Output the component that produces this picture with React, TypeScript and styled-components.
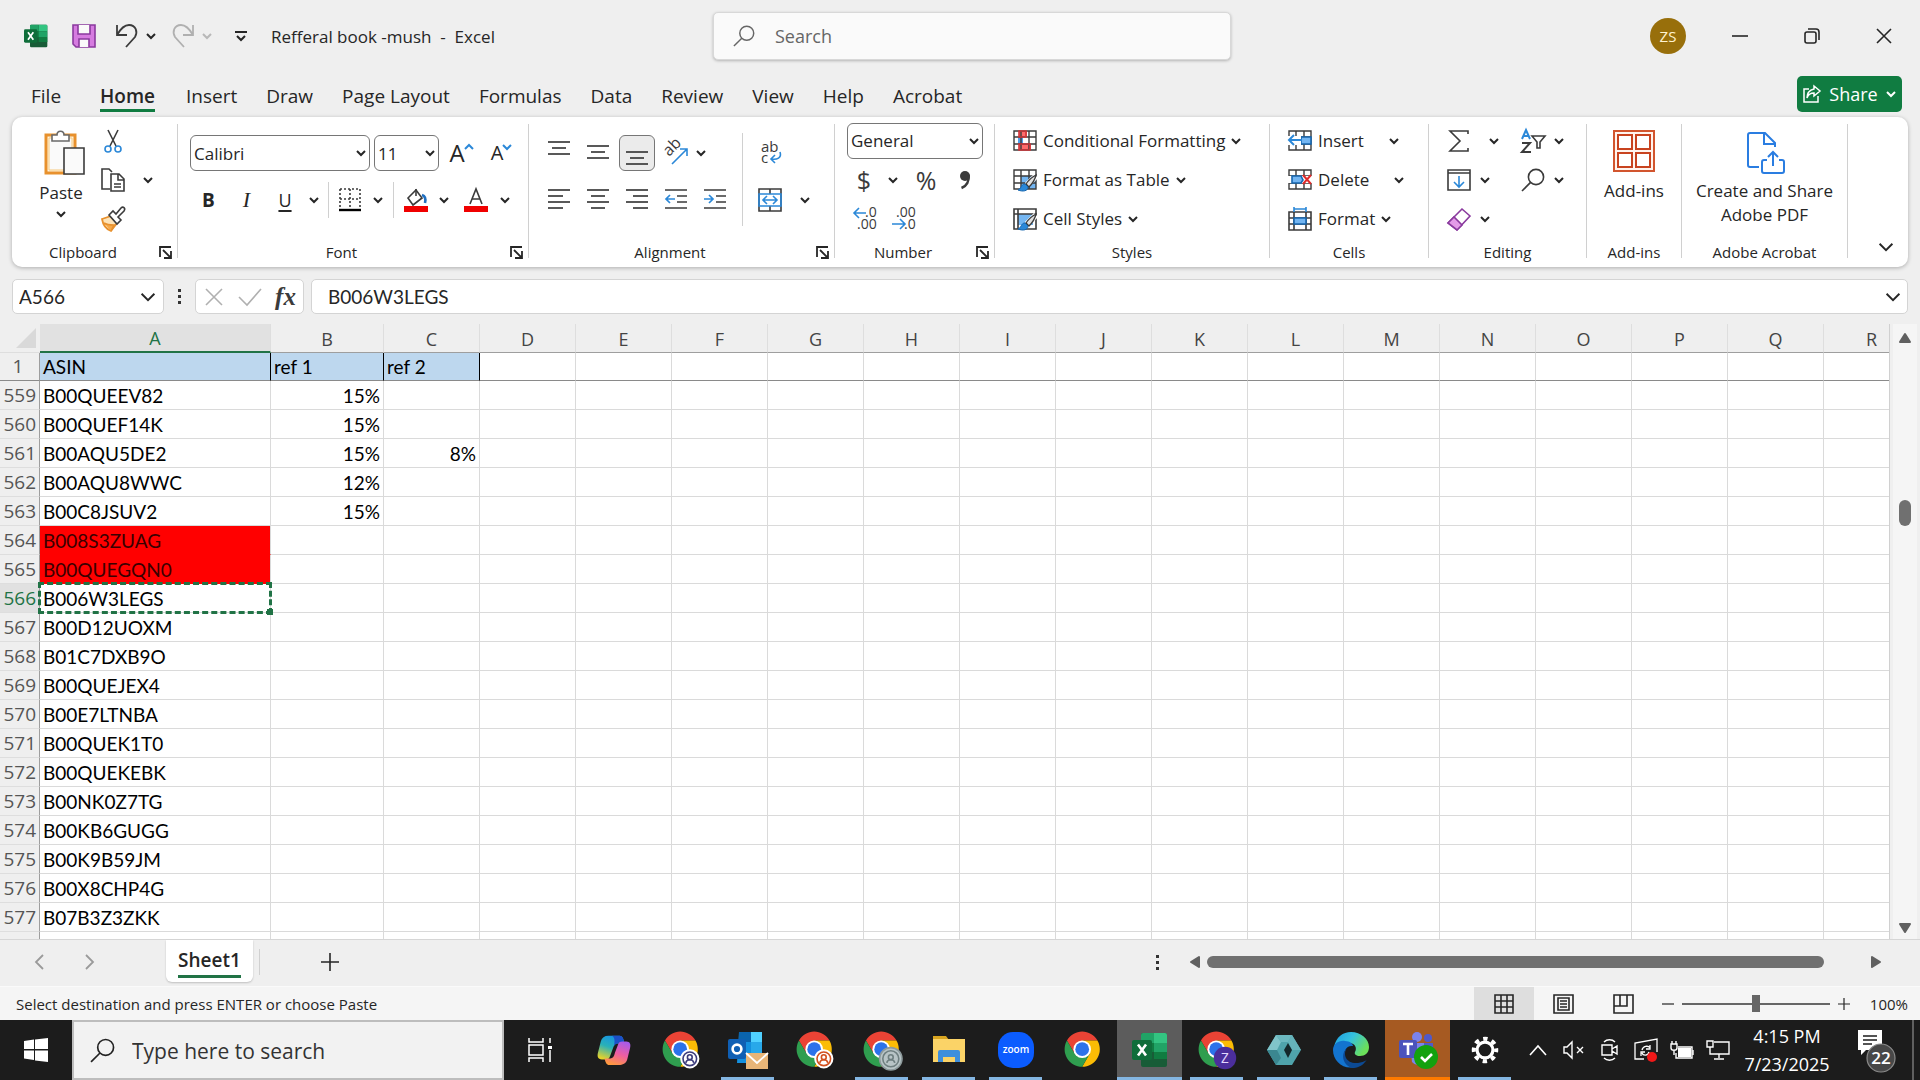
import React from "react";
import styled, { createGlobalStyle, css } from "styled-components";

const ui = `"Open Sans", "Noto Sans", sans-serif`;
const sheet = `Lato, "Open Sans", sans-serif`;
const ink = "#262626";
const line = "#3b3b3b";
const blue = "#2b88d8";
const green = "#107c41";

const Global = createGlobalStyle`
  *, *::before, *::after { box-sizing: border-box; }
  body { margin: 0; background: #efefef; color: ${ink}; font-family: ${ui}; font-size: 17px; overflow: hidden; }
  button, input, select { font: inherit; color: inherit; border: 0; background: none; padding: 0; margin: 0; outline: none; }
  svg { display: block; flex: none; overflow: visible; }
`;

const Shell = styled.div`
  display: flex;
  flex-direction: column;
  height: 100vh;
`;

/* ---------- drawing helpers ---------- */

type SvgProps = { w: number; h?: number; vb?: string; children: React.ReactNode; stroke?: string; sw?: number };
const Draw = ({ w, h = w, vb, children, stroke = line, sw = 1.6 }: SvgProps) => (
  <svg width={w} height={h} viewBox={vb ?? `0 0 ${w} ${h}`} fill="none" stroke={stroke} strokeWidth={sw} aria-hidden="true">
    {children}
  </svg>
);

const Chevron = ({ color = "#262626", size = 10, sw = 2 }: { color?: string; size?: number; sw?: number }) => (
  <Draw w={size} vb="0 0 10 10" stroke={color} sw={sw}>
    <path d="M1 3l4 4 4-4" />
  </Draw>
);

const Magnifier = ({ size, color }: { size: number; color: string }) => (
  <Draw w={size} vb="0 0 24 24" stroke={color} sw={1.6}>
    <circle cx="15" cy="9" r="7.6" />
    <path d="M9.6 14.4L1 23" />
  </Draw>
);

/* ---------- title bar ---------- */

const TitleBar = styled.header`
  display: grid;
  grid-template-columns: 713fr 518px 689fr;
  align-items: center;
  height: 72px;
  flex: none;
`;

const QuickAccess = styled.div`
  display: flex;
  align-items: center;
  padding-left: 24px;
`;

const QuickButton = styled.button<{ $w: number; $gap?: number }>`
  display: flex;
  align-items: center;
  justify-content: center;
  width: ${(p) => p.$w}px;
  height: 30px;
  margin-right: ${(p) => p.$gap ?? 0}px;
`;

const DocTitle = styled.h1`
  margin: 0;
  font-size: 17px;
  font-weight: 400;
  white-space: pre;
`;

const SearchBox = styled.label`
  display: flex;
  align-items: center;
  gap: 20px;
  height: 48px;
  padding: 0 19px;
  background: #fafafa;
  border: 1px solid #d8d8d8;
  border-radius: 5px;
  box-shadow: 0 1px 3px rgba(0, 0, 0, 0.25);
  input {
    flex: 1;
    font-size: 18px;
  }
  input::placeholder {
    color: #666;
    opacity: 1;
  }
`;

const WindowControls = styled.div`
  display: flex;
  justify-content: flex-end;
  align-items: center;
`;

const Avatar = styled.button`
  width: 36px;
  height: 36px;
  margin-right: 18px;
  border-radius: 50%;
  background: #986f0b;
  color: #fff3d0;
  font-size: 15px;
`;

const ControlButton = styled.button`
  display: flex;
  justify-content: center;
  align-items: center;
  width: 72px;
  height: 48px;
`;

const ExcelLogo = ({ size }: { size: number }) => (
  <svg width={size} height={size} viewBox="0 0 36 36" aria-hidden="true">
    <rect x="9" y="1" width="26" height="34" rx="2" fill="#185c37" />
    <path d="M22 1h11a2 2 0 0 1 2 2v8H22z" fill="#33c481" />
    <path d="M9 3a2 2 0 0 1 2-2h11v10H9z" fill="#21a366" />
    <path d="M9 11h13v9H9z" fill="#107c41" />
    <path d="M22 11h13v9H22z" fill="#21a366" />
    <path d="M22 20h13v7H22z" fill="#107c41" />
    <rect x="0" y="8" width="20" height="20" rx="2" fill="#0f6d3a" />
    <path d="M6 12.5l8 11M14 12.5l-8 11" stroke="#fff" strokeWidth="2.6" />
  </svg>
);

const Title = () => (
  <TitleBar>
    <QuickAccess>
      <QuickButton $w={24} $gap={24} aria-label="Excel"><ExcelLogo size={24} /></QuickButton>
      <QuickButton $w={24} $gap={19} aria-label="Save">
        <Draw w={24} stroke="#8a3a9e">
          <path d="M1 1h22v22H4l-3-3z" fill="#d67be0" />
          <path d="M6 1v9h12V1" fill="#fafafa" />
          <path d="M7 23v-8h10v8" fill="#fafafa" />
        </Draw>
      </QuickButton>
      <QuickButton $w={24} $gap={7} aria-label="Undo">
        <Draw w={24} sw={1.8}><path d="M2 1v10h10M2 11C6 4 10 1 14 1c7 0 9 7 6 12l-9 10" /></Draw>
      </QuickButton>
      <QuickButton $w={10} $gap={15} aria-label="Undo history"><Chevron /></QuickButton>
      <QuickButton $w={24} $gap={7} aria-label="Redo">
        <Draw w={24} stroke="#b0b0b0" sw={1.8}><path d="M22 1v10H12M22 11C18 4 14 1 10 1 3 1 1 8 4 13l9 10" /></Draw>
      </QuickButton>
      <QuickButton $w={10} $gap={23} aria-label="Redo history"><Chevron color="#b8b8b8" /></QuickButton>
      <QuickButton $w={12} $gap={24} aria-label="Customize toolbar">
        <Draw w={12} stroke={ink} sw={2}><path d="M0 2h12M2 6l4 4 4-4" /></Draw>
      </QuickButton>
      <DocTitle>Refferal book -mush  -  Excel</DocTitle>
    </QuickAccess>
    <SearchBox>
      <Magnifier size={22} color="#666" />
      <input type="text" placeholder="Search" aria-label="Search" />
    </SearchBox>
    <WindowControls>
      <Avatar>ZS</Avatar>
      <ControlButton aria-label="Minimize"><Draw w={16} stroke={ink}><path d="M0 8h16" /></Draw></ControlButton>
      <ControlButton aria-label="Restore">
        <Draw w={16} stroke={ink}><rect x="1" y="4" width="11" height="11" rx="2" /><path d="M4 1h8a3 3 0 0 1 3 3v8" /></Draw>
      </ControlButton>
      <ControlButton aria-label="Close"><Draw w={16} stroke={ink}><path d="M1 1l14 14M15 1L1 15" /></Draw></ControlButton>
    </WindowControls>
  </TitleBar>
);

/* ---------- ribbon tabs ---------- */

const TabRow = styled.nav`
  display: flex;
  align-items: flex-start;
  gap: 1px;
  height: 45px;
  flex: none;
  padding: 4px 18px 0 17px;
`;

const Tab = styled.button<{ $active?: boolean }>`
  height: 36px;
  padding: 0 ${(p) => (p.$active ? 16 : 14)}px;
  font-size: 19px;
  font-weight: ${(p) => (p.$active ? 600 : 400)};
  &:first-child {
    margin-right: 8px;
  }
  span {
    display: block;
    height: 36px;
    line-height: 40px;
    border-bottom: 3px solid ${(p) => (p.$active ? green : "transparent")};
  }
`;

const ShareButton = styled.button`
  display: flex;
  align-items: center;
  justify-content: space-between;
  width: 105px;
  height: 36px;
  margin-left: auto;
  padding: 0 6px;
  border-radius: 5px;
  background: ${green};
  color: #fff;
  font-size: 18px;
`;

const tabs = ["File", "Home", "Insert", "Draw", "Page Layout", "Formulas", "Data", "Review", "View", "Help", "Acrobat"];

const Tabs = () => (
  <TabRow>
    {tabs.map((t) => (
      <Tab key={t} $active={t === "Home"}><span>{t}</span></Tab>
    ))}
    <ShareButton>
      <Draw w={18} stroke="#fff" sw={1.5}><path d="M6 4H1v13h14v-6M11 1l6 5-6 5V8c-4 0-6 2-7 5 0-5 3-8 7-9z" /></Draw>
      Share
      <Chevron color="#fff" />
    </ShareButton>
  </TabRow>
);

/* ---------- ribbon ---------- */

const RibbonPanel = styled.section`
  display: flex;
  flex: none;
  height: 150px;
  margin: 0 12px;
  background: #fff;
  border-radius: 10px;
  box-shadow: 0 1px 4px rgba(0, 0, 0, 0.28);
`;

const GroupBox = styled.div<{ $w: number }>`
  display: flex;
  flex-direction: column;
  flex: none;
  width: ${(p) => p.$w}px;
  margin: 7px 0 9px;
  border-right: 1px solid #d0d0d0;
`;

const GroupBody = styled.div<{ $pad: number }>`
  display: flex;
  flex: 1;
  margin-top: -3px;
  padding-left: ${(p) => p.$pad}px;
`;

const GroupFooter = styled.div`
  display: flex;
  align-items: center;
  height: 12px;
  font-size: 15px;
  span {
    flex: 1;
    text-align: center;
    line-height: 20px;
  }
`;

const Launcher = styled.button`
  width: 23px;
  height: 14px;
  padding-left: 5px;
`;

const Stack = styled.div<{ $top?: number; $gap?: number; $w?: number }>`
  display: flex;
  flex-direction: column;
  flex: none;
  padding-top: ${(p) => p.$top ?? 0}px;
  gap: ${(p) => p.$gap ?? 0}px;
  width: ${(p) => (p.$w ? `${p.$w}px` : "auto")};
`;

const Row = styled.div<{ $h?: number; $gap?: number }>`
  display: flex;
  align-items: center;
  gap: ${(p) => p.$gap ?? 0}px;
  height: ${(p) => p.$h ?? 39}px;
`;

const Tool = styled.button<{ $w?: number; $on?: boolean }>`
  display: flex;
  flex: none;
  align-items: center;
  justify-content: center;
  width: ${(p) => p.$w ?? 36}px;
  height: 36px;
  ${(p) =>
    p.$on &&
    css`
      background: #ebebeb;
      border: 1px solid #767676;
      border-radius: 6px;
    `}
`;

const LabelTool = styled.button`
  display: flex;
  align-items: center;
  gap: 6px;
  height: 36px;
  white-space: nowrap;
`;

const BigTool = styled.button<{ $w: number }>`
  display: flex;
  flex-direction: column;
  align-items: center;
  width: ${(p) => p.$w}px;
  padding-top: 9px;
  line-height: 24px;
  svg:first-child {
    margin-bottom: 6px;
  }
  svg:last-child:not(:first-child) {
    margin-top: 4px;
  }
`;

const Rule = styled.span<{ $h: number; $m?: string }>`
  width: 1px;
  height: ${(p) => p.$h}px;
  margin: ${(p) => p.$m ?? "0"};
  background: #d0d0d0;
`;

const Combo = styled.label<{ $w: number }>`
  display: grid;
  align-items: center;
  width: ${(p) => p.$w}px;
  height: 36px;
  background: #fff;
  border: 1px solid #767676;
  border-radius: 6px;
  select {
    grid-area: 1 / 1;
    width: 100%;
    padding-left: 3px;
    appearance: none;
  }
  svg {
    grid-area: 1 / 1;
    justify-self: end;
    margin-right: 3px;
    pointer-events: none;
  }
`;

const Picker = ({ w, value, label }: { w: number; value: string; label: string }) => (
  <Combo $w={w}>
    <select aria-label={label} defaultValue={value}><option>{value}</option></select>
    <Chevron />
  </Combo>
);

const More = ({ w = 20, label }: { w?: number; label: string }) => (
  <Tool $w={w} aria-label={label}><Chevron /></Tool>
);

type GroupProps = { w: number; pad: number; label: string; launcher?: boolean; children: React.ReactNode };
const Group = ({ w, pad, label, launcher, children }: GroupProps) => (
  <GroupBox $w={w}>
    <GroupBody $pad={pad}>{children}</GroupBody>
    <GroupFooter>
      <span>{label}</span>
      {launcher && (
        <Launcher aria-label={`${label} settings`}>
          <Draw w={13} stroke={ink} sw={1.8}><path d="M1 11V1h11M4 4l7 7M12 5v7H5" /></Draw>
        </Launcher>
      )}
    </GroupFooter>
  </GroupBox>
);

const Lines = ({ rows }: { rows: [number, number, number][] }) => (
  <Draw w={22} h={24} sw={1.7}>
    {rows.map(([x1, x2, y], i) => <path key={i} d={`M${x1} ${y}H${x2}`} />)}
  </Draw>
);

const GlyphA = styled.span<{ $size: number }>`
  font-size: ${(p) => p.$size}px;
  line-height: 36px;
`;

const BoldB = styled.b`font-size: 19px;`;
const ItalicI = styled.i`font: italic 22px "Liberation Serif", serif;`;
const UnderU = styled.u`font-size: 18px; text-underline-offset: 3px; text-decoration-thickness: 2px;`;
const Symbol = styled.span`font-size: 25px; line-height: 34px; color: ${line};`;

const GridBase = () => <path d="M1 1h22v19H1zM1 7h22M1 14h22M8 1v19M16 1v19" strokeWidth="1.4" />;
const Brush = () => (
  <>
    <path d="M23 7l-9 9" stroke="#fff" strokeWidth="6" />
    <path d="M23 6c-4 2-8 6-10 9l3 3c3-3 6-7 7-12z" fill="#e0e0e0" strokeWidth="1.3" />
    <path d="M12 15c-4 0-3 4-7 6 5 2 10 1 10-3z" fill="#2b88d8" stroke="#1767b0" strokeWidth="1" />
  </>
);

const CollapseButton = styled.button`
  align-self: flex-end;
  margin: 0 6px 12px auto;
  padding: 0 8px;
`;

const Ribbon = () => (
  <RibbonPanel>
    <Group w={166} pad={24} label="Clipboard" launcher>
      <BigTool $w={50}>
        <Draw w={50} h={45} vb="-8 0 50 45">
          <path d="M2 5h29v38H2z" fill="#fff3dc" stroke="#e8912d" strokeWidth="3" />
          <path d="M5 8h23v32H5z" fill="#fafafa" stroke="#f7c97c" strokeWidth="1" />
          <path d="M8 11V5h5c0-5 7-5 7 0h5v6z" fill="#fff" stroke="#6a6a6a" />
          <path d="M20 18h20v26H20z" fill="#fafafa" />
        </Draw>
        Paste
        <Chevron />
      </BigTool>
      <Stack $w={60}>
        <Row>
          <Tool $w={54} aria-label="Cut">
            <Draw w={18} h={24}>
              <path d="M4 1l8 16M14 1L6 17" /><circle cx="4" cy="20" r="3" stroke={blue} /><circle cx="14" cy="20" r="3" stroke={blue} />
            </Draw>
          </Tool>
        </Row>
        <Row>
          <Tool $w={54} aria-label="Copy">
            <Draw w={24}>
              <path d="M9 21H1V1h7l3 3" /><path d="M10 6h8l5 5v12H10zM17 6v6h6M13 16h7M13 19h7" />
            </Draw>
          </Tool>
          <More w={16} label="Copy options" />
        </Row>
        <Row>
          <Tool $w={54} aria-label="Format painter">
            <Draw w={24} h={26}>
              <path d="M1 13l9-3 6 7-6 8c-5-2-8-6-9-12z" fill="#fde3b8" stroke="#e8912d" strokeWidth="1.8" />
              <path d="M3 17c3 2 6 2 10 2l-3 6" fill="#f6a94a" stroke="#e8912d" />
              <path d="M8 9l4-4 3 3 5-6c2-2 5 0 3 3l-6 6 3 3-4 4z" fill="#fff" />
            </Draw>
          </Tool>
        </Row>
      </Stack>
    </Group>

    <Group w={351} pad={12} label="Font" launcher>
      <Stack $top={8}>
        <Row $h={48} $gap={4}>
          <Picker w={180} value="Calibri" label="Font name" />
          <Picker w={65} value="11" label="Font size" />
          <Tool aria-label="Increase font size">
            <GlyphA $size={24}>A</GlyphA>
            <Draw w={8} h={20} stroke={blue} sw={2}><path d="M0 6l4-4 4 4" /></Draw>
          </Tool>
          <Tool aria-label="Decrease font size">
            <GlyphA $size={20}>A</GlyphA>
            <Draw w={8} h={20} stroke={blue} sw={2}><path d="M0 2l4 4 4-4" /></Draw>
          </Tool>
        </Row>
        <Row $h={46}>
          <Tool $w={37} aria-label="Bold"><BoldB>B</BoldB></Tool>
          <Tool $w={39} aria-label="Italic"><ItalicI>I</ItalicI></Tool>
          <Tool $w={38} aria-label="Underline"><UnderU>U</UnderU></Tool>
          <More label="Underline options" />
          <Rule $h={36} $m="0 3px 0 4px" />
          <Tool aria-label="Borders">
            <Draw w={24}>
              <path d="M2 1v20M12 1v20M22 1v20M2 1h20M2 11h20" strokeDasharray="2 2" /><path d="M1 22h22" stroke="#000" strokeWidth="2.4" />
            </Draw>
          </Tool>
          <More label="Border options" />
          <Rule $h={36} $m="0 4px 0 5px" />
          <Tool aria-label="Fill color">
            <Draw w={24}>
              <path d="M4 10l8-8 6 8-9 7z" /><path d="M12 1v7" /><path d="M18 7c3 1 4 4 3 8" stroke="#1f6fc0" strokeWidth="2.6" />
              <path d="M0 18h24v6H0z" fill="#f00000" stroke="none" />
            </Draw>
          </Tool>
          <More label="Fill options" />
          <Tool $w={44} aria-label="Font color">
            <Draw w={24}>
              <path d="M6 16l6-15 6 15M8 11h8" /><path d="M0 18h24v6H0z" fill="#f00000" stroke="none" />
            </Draw>
          </Tool>
          <More w={14} label="Font color options" />
        </Row>
      </Stack>
    </Group>

    <Group w={306} pad={12} label="Alignment" launcher>
      <Stack $top={8}>
        <Row $h={48} $gap={3}>
          <Tool aria-label="Top align"><Lines rows={[[0, 22, 1], [4, 18, 7], [0, 22, 13]]} /></Tool>
          <Tool aria-label="Middle align"><Lines rows={[[0, 22, 5], [4, 18, 11], [0, 22, 17]]} /></Tool>
          <Tool $on aria-label="Bottom align"><Lines rows={[[0, 22, 11], [4, 18, 17], [0, 22, 23]]} /></Tool>
          <Tool aria-label="Orientation">
            <Draw w={26} h={24}>
              <text x="0" y="0" transform="translate(6 16) rotate(-45)" fontFamily={ui} fontSize="16" fill={line} stroke="none">ab</text>
              <path d="M9 23L24 8M17 8h7v7" stroke={blue} />
            </Draw>
          </Tool>
          <More w={8} label="Orientation options" />
        </Row>
        <Row $h={46} $gap={3}>
          <Tool aria-label="Align left"><Lines rows={[[0, 22, 2], [0, 15, 8], [0, 22, 14], [0, 15, 20]]} /></Tool>
          <Tool aria-label="Center"><Lines rows={[[0, 22, 2], [4, 18, 8], [0, 22, 14], [4, 18, 20]]} /></Tool>
          <Tool aria-label="Align right"><Lines rows={[[0, 22, 2], [7, 22, 8], [0, 22, 14], [7, 22, 20]]} /></Tool>
          <Tool aria-label="Decrease indent">
            <Draw w={22} h={24} sw={1.7}><path d="M0 2h22M12 8h10M12 14h10M0 20h22" /><path d="M10 11H1M5 7l-4 4 4 4" stroke={blue} /></Draw>
          </Tool>
          <Tool aria-label="Increase indent">
            <Draw w={22} h={24} sw={1.7}><path d="M0 2h22M12 8h10M12 14h10M0 20h22" /><path d="M0 11h9M5 7l4 4-4 4" stroke={blue} /></Draw>
          </Tool>
        </Row>
      </Stack>
      <Rule $h={93} $m="12px 9px 0 9px" />
      <Stack $top={8}>
        <Row $h={48}>
          <Tool $w={38} aria-label="Wrap text">
            <Draw w={24} h={26}>
              <text fontFamily={ui} fontSize="15" fill={line} stroke="none"><tspan x="2" y="12">ab</tspan><tspan x="2" y="23">c</tspan></text>
              <path d="M21 12c2 6-3 8-9 7M16 15l-4 4 4 4" stroke={blue} />
            </Draw>
          </Tool>
        </Row>
        <Row $h={46}>
          <Tool aria-label="Merge and center">
            <Draw w={24}>
              <path d="M1 1h22v22H1zM12 1v5M12 18v5" /><path d="M1 6h22v12H1zM5 12h14M9 8l-4 4 4 4M15 8l4 4-4 4" stroke={blue} />
            </Draw>
          </Tool>
          <More w={34} label="Merge options" />
        </Row>
      </Stack>
    </Group>

    <Group w={160} pad={12} label="Number" launcher>
      <Stack>
        <Row><Picker w={136} value="General" label="Number format" /></Row>
        <Row>
          <Tool $w={34} aria-label="Currency"><Symbol>$</Symbol></Tool>
          <More w={24} label="Currency options" />
          <Tool $w={42} aria-label="Percent"><Symbol>%</Symbol></Tool>
          <Tool aria-label="Comma style">
            <Draw w={12} h={20}><circle cx="6" cy="6" r="5" fill={line} stroke="none" /><path d="M9.5 5c1 6-2 11-7 13" strokeWidth="2.6" /></Draw>
          </Tool>
        </Row>
        <Row $gap={3}>
          <Tool aria-label="Increase decimal">
            <Draw w={24}>
              <text fontFamily={ui} fontSize="14" fill={line} stroke="none"><tspan x="12" y="10">.0</tspan><tspan x="4" y="22">.00</tspan></text>
              <path d="M13 6H1M6 1L1 6l5 5" stroke={blue} />
            </Draw>
          </Tool>
          <Tool aria-label="Decrease decimal">
            <Draw w={24}>
              <text fontFamily={ui} fontSize="14" fill={line} stroke="none"><tspan x="4" y="10">.00</tspan><tspan x="12" y="22">.0</tspan></text>
              <path d="M0 17h12M8 12l5 5-5 5" stroke={blue} />
            </Draw>
          </Tool>
        </Row>
      </Stack>
    </Group>

    <Group w={275} pad={18} label="Styles">
      <Stack>
        <Row>
          <LabelTool>
            <Draw w={24} h={22}>
              <path d="M6 1h8v6H6zM6 14h12v6H6z" fill="#ff6b6b" stroke="none" /><path d="M5 7h5v7H5z" fill="#4f9fe8" stroke="none" />
              <GridBase /><path d="M6 1h7v6H6zM6 14h11v6H6z" stroke="#d13438" />
            </Draw>
            Conditional Formatting <Chevron />
          </LabelTool>
        </Row>
        <Row>
          <LabelTool>
            <Draw w={24} h={22}><path d="M8 7h15v13H8z" fill="#74b6f2" stroke="none" /><GridBase /><Brush /></Draw>
            Format as Table <Chevron />
          </LabelTool>
        </Row>
        <Row>
          <LabelTool>
            <Draw w={24} h={22}><path d="M5 6h15v11H5z" fill="#74b6f2" stroke="none" /><path d="M1 1h22v20H1zM5 1v20M1 6h22" /><Brush /></Draw>
            Cell Styles <Chevron />
          </LabelTool>
        </Row>
      </Stack>
    </Group>

    <Group w={159} pad={18} label="Cells">
      <Stack>
        <Row $gap={20}>
          <LabelTool>
            <Draw w={24} h={22}><GridBase /><path d="M13 7h10v7H13z" fill="#74b6f2" stroke="#1767b0" /><path d="M0 6h13v9H0z" fill="#fff" stroke="none" /><path d="M14 10H1M6 5l-5 5 5 5" stroke={blue} strokeWidth="2" /></Draw>
            Insert
          </LabelTool>
          <More label="Insert options" />
        </Row>
        <Row $gap={20}>
          <LabelTool>
            <Draw w={24} h={22}><GridBase /><path d="M0 7h24v7H0z" fill="#fff" stroke="none" /><path d="M4 7h9l2 4-2 3H4z" fill="#74b6f2" stroke="#1767b0" /><path d="M15 6l8 9M23 6l-8 9" stroke="#e02b2b" strokeWidth="2" /></Draw>
            Delete
          </LabelTool>
          <More label="Delete options" />
        </Row>
        <Row>
          <LabelTool>
            <Draw w={24} h={24}><path d="M1 5h22v18H1zM1 11h22M1 17h22M6 5v18M18 5v18" /><path d="M6 11h12v6H6z" fill="#74b6f2" stroke="#1767b0" /><path d="M6 0v5M18 0v5M6 2h12" stroke={blue} /></Draw>
            Format <Chevron />
          </LabelTool>
        </Row>
      </Stack>
    </Group>

    <Group w={158} pad={12} label="Editing">
      <Stack $w={74}>
        <Row $gap={7}>
          <Tool aria-label="AutoSum"><Draw w={20} h={22}><path d="M19 4V1H1l10 10L1 21h18v-3" /></Draw></Tool>
          <More label="Sum options" />
        </Row>
        <Row>
          <Tool aria-label="Fill"><Draw w={24} h={22}><path d="M1 1h22v20H1zM1 4h22" /><path d="M12 7v11M7 13l5 5 5-5" stroke={blue} /></Draw></Tool>
          <More w={16} label="Fill series options" />
        </Row>
        <Row>
          <Tool aria-label="Clear">
            <Draw w={24} stroke="#8a3a9e"><path d="M1 16L15 2l8 7L10 23z" fill="#fff" /><path d="M1 16l6-6 8 8-5 5z" fill="#e49be8" /></Draw>
          </Tool>
          <More w={16} label="Clear options" />
        </Row>
      </Stack>
      <Stack>
        <Row>
          <Tool aria-label="Sort and filter">
            <Draw w={26} h={26}>
              <path d="M2 11l4-9 4 9M4 8h5" stroke={blue} strokeWidth="2" /><path d="M2 15h8L2 24h9" strokeWidth="2" />
              <path d="M12 8h13l-5 6v6h-3v-6z" />
            </Draw>
          </Tool>
          <More w={16} label="Sort options" />
        </Row>
        <Row>
          <Tool aria-label="Find and select"><Magnifier size={24} color={line} /></Tool>
          <More w={16} label="Find options" />
        </Row>
      </Stack>
    </Group>

    <Group w={95} pad={0} label="Add-ins">
      <BigTool $w={94}>
        <Draw w={42} h={43} stroke="#c8431f" sw={2}>
          <path d="M1 1h40v40H1z" fill="#fff4ee" stroke="#d2552e" /><path d="M5 5h14v14H5zM23 5h14v14H23zM5 23h14v14H5zM23 23h14v14H23z" fill="#fff" />
        </Draw>
        Add-ins
      </BigTool>
    </Group>

    <Group w={166} pad={0} label="Adobe Acrobat">
      <BigTool $w={165}>
        <Draw w={36} h={43} vb="0 -1 36 43" stroke="#2a7de1" sw={2}>
          <path d="M12 36H3a2 2 0 0 1-2-2V4a2 2 0 0 1 2-2h15l10 10v4M17 2v11h11" />
          <path d="M20 29h-3a2 2 0 0 0-2 2v9a2 2 0 0 0 2 2h18a2 2 0 0 0 2-2v-9a2 2 0 0 0-2-2h-3M26 35V21M21 26l5-5 5 5" />
        </Draw>
        <span>Create and Share<br />Adobe PDF</span>
      </BigTool>
    </Group>

    <CollapseButton aria-label="Collapse ribbon"><Chevron size={16} sw={1.2} /></CollapseButton>
  </RibbonPanel>
);

/* ---------- formula bar ---------- */

const FormulaRow = styled.section`
  display: flex;
  flex: none;
  height: 57px;
  padding: 12px 12px 10px;
`;

const Field = styled.div<{ $w?: number }>`
  display: flex;
  align-items: center;
  flex: ${(p) => (p.$w ? `0 0 ${p.$w}px` : "1")};
  min-width: 0;
  height: 35px;
  background: #fff;
  border: 1px solid #d4d4d4;
  border-radius: 5px;
  & + & {
    margin-left: 7px;
  }
  input {
    flex: 1;
    width: 0;
    min-width: 0;
    font-family: ${sheet};
    font-size: 19px;
  }
`;

const NameInput = styled.input`
  padding-left: 6px;
`;

const FormulaInput = styled.input`
  padding-left: 16px;
`;

const FieldButton = styled.button<{ $w: number }>`
  display: flex;
  justify-content: center;
  width: ${(p) => p.$w}px;
`;

const Fx = styled.span`
  font: italic bold 25px/30px "Liberation Serif", serif;
  color: ${line};
`;

const Dots = styled.span<{ $m: string }>`
  display: flex;
  flex-direction: column;
  justify-content: center;
  gap: 3px;
  margin: ${(p) => p.$m};
  &::before, &::after, i {
    content: "";
    width: 3px;
    height: 3px;
    background: #333;
  }
`;

const FormulaBar = () => (
  <FormulaRow>
    <Field $w={152}>
      <NameInput aria-label="Name box" defaultValue="A566" />
      <FieldButton $w={30} aria-label="Names"><Chevron size={16} sw={1.2} /></FieldButton>
    </Field>
    <Dots $m="0 14px 1px"><i /></Dots>
    <Field $w={109}>
      <FieldButton $w={36} aria-label="Cancel"><Draw w={18} stroke="#b0b0b0"><path d="M1 1l16 16M17 1L1 17" /></Draw></FieldButton>
      <FieldButton $w={36} aria-label="Enter"><Draw w={24} h={18} stroke="#b0b0b0"><path d="M1 9l8 8L23 1" /></Draw></FieldButton>
      <FieldButton $w={35} aria-label="Insert function"><Fx>fx</Fx></FieldButton>
    </Field>
    <Field>
      <FormulaInput aria-label="Formula" defaultValue="B006W3LEGS" />
      <FieldButton $w={28} aria-label="Expand formula bar"><Chevron size={16} sw={1.2} /></FieldButton>
    </Field>
  </FormulaRow>
);

/* ---------- worksheet ---------- */

const SheetArea = styled.main`
  display: flex;
  flex: 1;
  min-height: 0;
`;

const GridClip = styled.div`
  flex: 1;
  min-width: 0;
  overflow: hidden;
  border-right: 1px solid #d0d0d0;
  background: #fff;
`;

const Cells = styled.table`
  width: 1920px;
  table-layout: fixed;
  border-collapse: separate;
  border-spacing: 0;
  font-family: ${sheet};
  font-size: 19px;
  color: #000;
`;

const Col = styled.col<{ $w: number }>`
  width: ${(p) => p.$w}px;
`;

const ColHead = styled.th<{ $on?: boolean }>`
  height: 29px;
  padding: 2px 0 0;
  font: 400 18px/25px ${ui};
  background: ${(p) => (p.$on ? "#e1e1e1" : "#efefef")};
  color: ${(p) => (p.$on ? "#217346" : "#444")};
  border-right: 1px solid #dedede;
  border-bottom: ${(p) => (p.$on ? "2px solid #217346" : "1px solid #9e9e9e")};
`;

const Corner = styled.td`
  background: #efefef;
  border-bottom: 1px solid #dedede;
  padding: 0 3px 4px 16px;
  vertical-align: bottom;
`;

const RowHead = styled.th<{ $on?: boolean; $frozen?: boolean }>`
  padding: ${(p) => (p.$frozen ? 0 : 1)}px 3px 0 0;
  font: 400 19px/25px ${ui};
  text-align: ${(p) => (p.$frozen ? "center" : "right")};
  background: ${(p) => (p.$on ? "#e1e1e1" : "#efefef")};
  color: ${(p) => (p.$on ? "#217346" : "#555")};
  border-right: 1px solid #9e9e9e;
  border-bottom: 1px solid ${(p) => (p.$frozen ? "#8a8a8a" : "#dedede")};
`;

const Cell = styled.td<{ $fill?: string; $right?: boolean; $frozen?: boolean; $edge?: string; $active?: boolean }>`
  position: ${(p) => (p.$active ? "relative" : "static")};
  height: ${(p) => (p.$frozen ? 28 : 29)}px;
  padding: ${(p) => (p.$frozen ? 0 : 1)}px 3px 0;
  line-height: 25px;
  text-align: ${(p) => (p.$right ? "right" : "left")};
  background: ${(p) => p.$fill ?? "#fff"};
  color: ${(p) => (p.$fill === "#ff0000" ? "#3a0000" : "#000")};
  border-right: 1px solid ${(p) => p.$edge ?? "#dadada"};
  border-bottom: 1px solid ${(p) => (p.$frozen ? "#8a8a8a" : p.$fill ?? "#dadada")};
`;

const Marquee = styled.span`
  position: absolute;
  inset: -2px;
  border: 3px dashed #217346;
  &::after {
    content: "";
    position: absolute;
    right: -4px;
    bottom: -4px;
    width: 6px;
    height: 6px;
    background: #217346;
  }
`;

const letters = "ABCDEFGHIJKLMNOPQR".split("");
const rows: [number, string, string?, string?][] = [
  [559, "B00QUEEV82", "15%"],
  [560, "B00QUEF14K", "15%"],
  [561, "B00AQU5DE2", "15%", "8%"],
  [562, "B00AQU8WWC", "12%"],
  [563, "B00C8JSUV2", "15%"],
  [564, "B008S3ZUAG"],
  [565, "B00QUEGQN0"],
  [566, "B006W3LEGS"],
  [567, "B00D12UOXM"],
  [568, "B01C7DXB9O"],
  [569, "B00QUEJEX4"],
  [570, "B00E7LTNBA"],
  [571, "B00QUEK1T0"],
  [572, "B00QUEKEBK"],
  [573, "B00NK0Z7TG"],
  [574, "B00KB6GUGG"],
  [575, "B00K9B59JM"],
  [576, "B00X8CHP4G"],
  [577, "B07B3Z3ZKK"],
];
const headings = ["ASIN", "ref 1", "ref 2"];
const flagged = [564, 565];
const active = 566;

const VScroll = styled.div`
  display: flex;
  flex-direction: column;
  align-items: center;
  width: 30px;
  padding: 7px 0 4px;
  background: linear-gradient(to right, #efefef 3px, #f5f5f5 3px, #f5f5f5 27px, #efefef 27px);
`;

const Thumb = styled.div<{ $w?: number; $h?: number; $grow?: number }>`
  flex: ${(p) => p.$grow ?? 0} 0 auto;
  width: ${(p) => (p.$w ? `${p.$w}px` : "auto")};
  height: ${(p) => p.$h}px;
  border-radius: 6px;
  background: #707070;
`;

const Space = styled.div<{ $grow: number }>`
  flex: ${(p) => p.$grow} 0 0;
`;

const Triangle = ({ turn }: { turn: number }) => (
  <Draw w={14} stroke="#606060" sw={2}>
    <path d="M7 3l5 8H2z" fill="#606060" strokeLinejoin="round" transform={`rotate(${turn} 7 7)`} />
  </Draw>
);

const Worksheet = () => (
  <SheetArea>
    <GridClip>
      <Cells>
        <colgroup>
          <Col $w={40} /><Col $w={231} /><Col $w={113} />
          {letters.slice(2).map((l) => <Col key={l} $w={96} />)}
        </colgroup>
        <thead>
          <tr>
            <Corner><Draw w={20} stroke="none"><path d="M20 0v20H0z" fill="#d9d9d9" /></Draw></Corner>
            {letters.map((l) => <ColHead key={l} scope="col" $on={l === "A"}>{l}</ColHead>)}
          </tr>
        </thead>
        <tbody>
          <tr>
            <RowHead scope="row" $frozen>1</RowHead>
            {letters.map((l, i) => (
              <Cell key={l} $frozen $fill={i < 3 ? "#bdd7ee" : undefined} $edge={i < 3 ? "#000" : undefined}>{headings[i]}</Cell>
            ))}
          </tr>
          {rows.map(([n, ...values]) => (
            <tr key={n}>
              <RowHead scope="row" $on={n === active}>{n}</RowHead>
              {letters.map((l, i) => (
                <Cell
                  key={l}
                  $right={i > 0}
                  $active={n === active && i === 0}
                  $fill={i === 0 && flagged.includes(n) ? "#ff0000" : undefined}
                >
                  {values[i]}
                  {n === active && i === 0 && <Marquee />}
                </Cell>
              ))}
            </tr>
          ))}
          <tr>
            <RowHead />
            {letters.map((l) => <Cell key={l} />)}
          </tr>
        </tbody>
      </Cells>
    </GridClip>
    <VScroll>
      <Triangle turn={0} />
      <Space $grow={156} />
      <Thumb $w={12} $h={26} />
      <Space $grow={396} />
      <Triangle turn={180} />
    </VScroll>
  </SheetArea>
);

/* ---------- sheet tabs ---------- */

const SheetBar = styled.section`
  display: flex;
  align-items: center;
  flex: none;
  height: 48px;
  padding: 0 37px 2px 32px;
  border-top: 1px solid #d6d6d6;
  border-bottom: 1px solid #fafafa;
`;

const NavButton = styled.button`
  display: flex;
  justify-content: center;
  width: 16px;
  margin-right: 33px;
`;

const SheetTab = styled.button`
  align-self: flex-start;
  width: 87px;
  height: 42px;
  margin-left: 36px;
  background: #fff;
  border-radius: 0 0 6px 6px;
  box-shadow: 0 1px 2px rgba(0, 0, 0, 0.2);
  font-size: 19px;
  font-weight: 600;
  span {
    display: inline-block;
    line-height: 30px;
    border-bottom: 3px solid #217346;
  }
`;

const HScroll = styled.div`
  display: flex;
  align-items: center;
  flex: 0 1 695px;
  height: 24px;
`;

const SheetTabs = () => (
  <SheetBar>
    <NavButton aria-label="Previous sheet"><Draw w={10} h={16} stroke="#9a9a9a" sw={1.8}><path d="M8 1L1 8l7 7" /></Draw></NavButton>
    <NavButton aria-label="Next sheet"><Draw w={10} h={16} stroke="#9a9a9a" sw={1.8}><path d="M2 1l7 7-7 7" /></Draw></NavButton>
    <SheetTab><span>Sheet1</span></SheetTab>
    <Rule $h={26} $m="0 62px 0 6px" />
    <NavButton aria-label="New sheet"><Draw w={18} stroke={ink}><path d="M9 0v18M0 9h18" /></Draw></NavButton>
    <Space $grow={1} />
    <Dots $m="0 29px 0 0"><i /></Dots>
    <HScroll>
      <Triangle turn={-90} />
      <Space $grow={5} />
      <Thumb $h={12} $grow={617} />
      <Space $grow={45} />
      <Triangle turn={90} />
    </HScroll>
  </SheetBar>
);

/* ---------- status bar ---------- */

const Status = styled.footer`
  display: flex;
  align-items: center;
  flex: none;
  height: 33px;
  padding: 0 12px 0 16px;
  background: #f5f5f5;
  font-size: 15px;
`;

const StatusText = styled.span`
  margin-right: auto;
`;

const ViewButton = styled.button<{ $on?: boolean }>`
  display: flex;
  align-items: center;
  justify-content: center;
  width: 60px;
  height: 33px;
  background: ${(p) => (p.$on ? "#dedede" : "transparent")};
`;

const ZoomButton = styled.button`
  margin: 0 8px;
`;

const ZoomRange = styled.input`
  width: 148px;
  height: 18px;
  appearance: none;
  background: linear-gradient(#666, #666) center / 100% 2px no-repeat;
  &::-webkit-slider-thumb {
    appearance: none;
    width: 8px;
    height: 17px;
    background: #666;
  }
`;

const ZoomValue = styled.button`
  margin-left: 12px;
`;

const StatusBar = () => (
  <Status>
    <StatusText>Select destination and press ENTER or choose Paste</StatusText>
    <ViewButton $on aria-label="Normal view"><Draw w={20} stroke={ink}><path d="M1 1h18v18H1zM1 7h18M1 13h18M7 1v18M13 1v18" /></Draw></ViewButton>
    <ViewButton aria-label="Page layout view"><Draw w={21} h={20} stroke={ink}><path d="M1 1h19v18H1zM5 4h11v12H5zM7 7h7M7 10h7M7 13h7" /></Draw></ViewButton>
    <ViewButton aria-label="Page break view"><Draw w={21} h={20} stroke={ink}><path d="M1 1h19v18H1zM7 1v11h7V1M1 12h6" /></Draw></ViewButton>
    <ZoomButton aria-label="Zoom out"><Draw w={12} stroke={ink} sw={1.2}><path d="M0 6h12" /></Draw></ZoomButton>
    <ZoomRange type="range" aria-label="Zoom" min={0} max={200} defaultValue={100} />
    <ZoomButton aria-label="Zoom in"><Draw w={12} stroke={ink} sw={1.2}><path d="M0 6h12M6 0v12" /></Draw></ZoomButton>
    <ZoomValue>100%</ZoomValue>
  </Status>
);

/* ---------- taskbar ---------- */

const Taskbar = styled.footer`
  display: flex;
  flex: none;
  height: 60px;
  background: #1c1c1c;
  color: #fff;
`;

const StartButton = styled.button<{ $w: number }>`
  display: flex;
  align-items: center;
  justify-content: center;
  width: ${(p) => p.$w}px;
`;

const TaskSearch = styled.label`
  display: flex;
  align-items: center;
  gap: 17px;
  width: 432px;
  padding-left: 16px;
  background: #f2f2f2;
  border: 2px solid #bdbdbd;
  input {
    flex: 1;
    min-width: 0;
    padding-top: 2px;
    font-size: 21px;
    color: #333;
  }
  input::placeholder {
    color: #333;
    opacity: 1;
  }
`;

const AppList = styled.div`
  display: flex;
  gap: 2px;
  padding-left: 5px;
`;

const AppButton = styled.button<{ $open?: boolean; $bg?: string; $bar?: string }>`
  display: grid;
  grid-template-rows: 57px 3px;
  justify-items: center;
  align-items: center;
  width: 65px;
  background: ${(p) => p.$bg ?? "transparent"};
  svg {
    margin-top: 3px;
  }
  &::after {
    content: "";
    width: ${(p) => (p.$bg ? 65 : 53)}px;
    height: 3px;
    background: ${(p) => (p.$open ? p.$bar ?? "#84b6e2" : "transparent")};
  }
`;

const Tray = styled.div`
  display: flex;
  align-items: center;
  margin-left: auto;
`;

const TrayButton = styled.button`
  display: flex;
  justify-content: center;
  width: 36px;
`;

const Clock = styled.button`
  width: 102px;
  line-height: 28px;
  font-size: 18px;
  white-space: nowrap;
`;

const Notices = styled.button`
  width: 74px;
  padding-left: 20px;
`;

const PeekButton = styled.button`
  width: 8px;
  height: 60px;
  border-left: 2px solid #606060;
`;

const Chrome = ({ badge }: { badge?: "navy" | "orange" | "grey" | "z" }) => (
  <svg width="40" height="40" viewBox="0 0 50 50" aria-hidden="true">
    <path d="M24 13H43.05A22 22 0 0 0 4.95 13L14.47 29.5z" fill="#ea4335" />
    <path d="M24 13H43.05A22 22 0 0 1 24 46L33.53 29.5z" fill="#fbbc05" />
    <path d="M4.95 13A22 22 0 0 0 24 46L33.53 29.5H14.47z" fill="#2f9e4f" />
    <circle cx="24" cy="24" r="11" fill="#fff" />
    <circle cx="24" cy="24" r="8.6" fill="#2b72ea" />
    {badge === "z" ? (
      <>
        <circle cx="35" cy="35" r="14" fill="#4b2e9c" />
        <text x="35" y="41" textAnchor="middle" fontFamily={ui} fontSize="17" fill="#e3d8ff">Z</text>
      </>
    ) : badge ? (
      <g
        fill="none"
        strokeWidth="2"
        stroke={{ navy: "#3d3d7c", orange: "#d2501e", grey: "#6f7f80" }[badge]}
      >
        <circle cx="36" cy="36" r={badge === "grey" ? 14 : 11} fill={badge === "grey" ? "#b8c4c6" : "#fff"} stroke={badge === "grey" ? "#8d9a9c" : "#fff"} />
        <circle cx="36" cy="36" r={badge === "grey" ? 10 : 8.5} />
        <circle cx="36" cy="34" r="3" />
        <path d="M31 41c1-5 9-5 10 0" />
      </g>
    ) : null}
  </svg>
);

const apps: { name: string; open?: boolean; bg?: string; bar?: string; art: React.ReactNode }[] = [
  {
    name: "Copilot",
    art: (
      <svg width="34" height="36" viewBox="0 0 36 38">
        <defs>
          <linearGradient id="cpA" x1="0.7" y1="0" x2="0.3" y2="1"><stop offset="0" stopColor="#1590e6" /><stop offset=".5" stopColor="#29b1b8" /><stop offset="1" stopColor="#e4d22c" /></linearGradient>
          <linearGradient id="cpB" x1="0.7" y1="0" x2="0.3" y2="1"><stop offset="0" stopColor="#a95be8" /><stop offset=".5" stopColor="#ee5ea2" /><stop offset="1" stopColor="#ff9a3c" /></linearGradient>
        </defs>
        <path d="M12 4h12c3 0 4 3 5 8h-7c-3 0-4 2-5 5l-3 8c-1 3-2 4-5 4H5c-4 0-5-3-4-7L4 10c1-4 4-6 8-6z" fill="url(#cpA)" />
        <path d="M16 4h8c3 0 4 3 5 8h-7c-2 0-3 1-4 3 1-5 1-9-2-11z" fill="#1c50c8" />
        <path d="M23 35H13c-3 0-4-3-5-7h6c3 0 4-2 5-6l3-8c1-3 2-4 5-4h4c4 0 5 3 4 7l-3 12c-1 4-5 6-9 6z" fill="url(#cpB)" />
      </svg>
    ),
  },
  { name: "Chrome profile 1", art: <Chrome badge="navy" /> },
  {
    name: "Outlook",
    open: true,
    art: (
      <svg width="40" height="38" viewBox="0 0 40 38">
        <path d="M11 1h23v31H9z" fill="#1490df" /><path d="M23 1h11v10H23z" fill="#50d0ff" /><path d="M11 1h12v10H11z" fill="#0a64ad" />
        <path d="M23 11h11v12H23z" fill="#28a8ea" /><rect x="0" y="8" width="18" height="20" rx="2" fill="#0f5fb4" />
        <circle cx="9" cy="18" r="4.4" fill="none" stroke="#fff" strokeWidth="2.6" />
        <path d="M18 22h22v16H18z" fill="#e8b577" /><path d="M18 22l11 10 11-10" fill="none" stroke="#fff" strokeWidth="1.8" />
      </svg>
    ),
  },
  { name: "Chrome profile 2", art: <Chrome badge="orange" /> },
  { name: "Chrome profile 3", open: true, art: <Chrome badge="grey" /> },
  {
    name: "File Explorer",
    open: true,
    art: (
      <svg width="34" height="30" viewBox="0 0 34 30">
        <path d="M1 1h13l3 4h-16z" fill="#d9a520" /><path d="M1 4h32v23H1z" fill="#fbd367" />
        <path d="M6 27V17a2 2 0 0 1 2-2h18a2 2 0 0 1 2 2v10h-5v-5H11v5z" fill="#3f8fdc" />
      </svg>
    ),
  },
  {
    name: "Zoom",
    open: true,
    art: (
      <svg width="36" height="36" viewBox="0 0 36 36">
        <rect width="36" height="36" rx="15" fill="#0b5cff" />
        <text x="18" y="21" textAnchor="middle" fontFamily={ui} fontWeight="600" fontSize="10" fill="#fff">zoom</text>
      </svg>
    ),
  },
  { name: "Chrome", art: <Chrome /> },
  { name: "Excel", open: true, bg: "#5c5c5c", art: <ExcelLogo size={36} /> },
  { name: "Chrome profile Z", open: true, art: <Chrome badge="z" /> },
  {
    name: "Hexagon",
    open: true,
    art: (
      <svg width="34" height="30" viewBox="0 0 34 30">
        <path d="M0 15L9 0h16l9 15-9 15H9z" fill="#4fa3ab" /><path d="M0 15L9 0l5 7-4 8z" fill="#80c4ca" /><path d="M14 7L9 0h16l-4 7z" fill="#6cb8bf" />
        <path d="M0 15l9 15 5-7-4-8z" fill="#3b8790" /><path d="M21 7l4-7 9 15h-9z" fill="#66b3ba" /><path d="M21 8l4 7-4 8-4-8z" fill="#14272a" />
      </svg>
    ),
  },
  {
    name: "Edge",
    open: true,
    art: (
      <svg width="36" height="36" viewBox="0 0 36 36">
        <defs>
          <linearGradient id="edA" x1="0" y1="0" x2="1" y2=".5"><stop offset="0" stopColor="#1b9de2" /><stop offset=".5" stopColor="#35c1e0" /><stop offset="1" stopColor="#6be05a" /></linearGradient>
        </defs>
        <path d="M1 15C3 5 10 0 18 0c10 0 18 7 18 15 0 6-4 9-9 9-4 0-6-2-5-4 2-3 1-9-6-9-6 0-11 2-15 4z" fill="url(#edA)" />
        <path d="M0 18c0-6 6-10 12-9 5 0 8 3 8 5-7-1-10 6-8 12 2 5 6 8 10 9C10 38 0 29 0 18z" fill="#1374cf" />
        <path d="M14 16c-6 8 2 20 18 13 2-1 2-1 0 1-3 4-8 6-13 6-9-3-12-14-5-20z" fill="#0c4a94" />
      </svg>
    ),
  },
  {
    name: "Teams",
    open: true,
    bg: "#a65a22",
    bar: "#ff7a00",
    art: (
      <svg width="40" height="38" viewBox="0 0 40 38">
        <circle cx="19" cy="6" r="5" fill="#7b83eb" /><circle cx="30" cy="7" r="4" fill="#5059c9" />
        <path d="M12 12h16v16a8 8 0 0 1-14 3z" fill="#7b83eb" /><path d="M26 12h9v12h-9z" fill="#5059c9" />
        <rect x="1" y="9" width="18" height="18" rx="2" fill="#4b53bc" /><path d="M5 13h10M10 13v11" stroke="#fff" strokeWidth="2.6" />
        <circle cx="28" cy="26" r="12" fill="#13a10e" /><path d="M23 26l4 4 7-7" stroke="#fff" strokeWidth="2.6" fill="none" />
      </svg>
    ),
  },
  {
    name: "Settings",
    open: true,
    art: (
      <svg width="28" height="28" viewBox="0 0 30 30" fill="none" stroke="#fff">
        <circle cx="15" cy="15" r="8.5" strokeWidth="3.4" />
        <circle cx="15" cy="15" r="12" strokeWidth="4.4" strokeDasharray="4.7 4.72" strokeDashoffset="2.3" />
      </svg>
    ),
  },
];

const TaskbarView = () => (
  <Taskbar>
    <StartButton $w={72} aria-label="Start">
      <svg width="24" height="24" viewBox="0 0 24 24" fill="#fff"><path d="M0 3l10-1.4V11H0zM11 1.4L24 0v11H11zM0 12.4h10V22L0 20.6zM11 12.4h13V24l-13-1.6z" /></svg>
    </StartButton>
    <TaskSearch>
      <Magnifier size={25} color="#222" />
      <input type="text" placeholder="Type here to search" aria-label="Taskbar search" />
    </TaskSearch>
    <StartButton $w={72} aria-label="Task view">
      <Draw w={24} stroke="#fff" sw={1.5}><path d="M1 0v4h14V0M1 24v-4h14v4M1 7h14v10H1zM22 0v5M22 12v12" /><path d="M20 8h4v3h-4z" fill="#fff" stroke="none" /></Draw>
    </StartButton>
    <AppList>
      {apps.map((a) => (
        <AppButton key={a.name} aria-label={a.name} $open={a.open} $bg={a.bg} $bar={a.bar}>{a.art}</AppButton>
      ))}
    </AppList>
    <Tray>
      <TrayButton aria-label="Hidden icons"><Draw w={18} h={12} stroke="#fff"><path d="M1 11l8-9 8 9" /></Draw></TrayButton>
      <TrayButton aria-label="Volume muted">
        <Draw w={22} h={20} stroke="#fff" sw={1.4}><path d="M1 7h3l5-5v16l-5-5H1zM14 7l6 6M20 7l-6 6" /></Draw>
      </TrayButton>
      <TrayButton aria-label="Camera">
        <Draw w={18} h={22} stroke="#fff" sw={1.4}><path d="M1 6h10v10H1zM11 10l5-3v8l-5-3M3 3c3-3 8-3 11 0M3 19c3 3 8 3 11 0" /></Draw>
      </TrayButton>
      <TrayButton aria-label="Sync">
        <Draw w={24} stroke="#fff" sw={1.3}>
          <path d="M10 21H1V5l22-4v13" /><path d="M8 12c1-4 6-5 8-2M16 7v4h-4M15 14c-1 4-6 4-7 1M7 18v-4h4" />
          <circle cx="18" cy="19" r="5" fill="#f01818" stroke="none" />
        </Draw>
      </TrayButton>
      <TrayButton aria-label="Battery">
        <Draw w={24} h={20} stroke="#fff" sw={1.4}><path d="M8 7h14v11H6v-5" /><path d="M8 8h13v9H8z" fill="#fff" stroke="none" /><path d="M23 10v5M2 1v3M6 1v3M1 4h6v4c0 3-6 3-6 0zM4 10v5" /></Draw>
      </TrayButton>
      <TrayButton aria-label="Network">
        <Draw w={24} h={20} stroke="#fff" sw={1.4}><path d="M8 2h15v12H4v-4M13 14v4M8 19h10M1 1h6v6H1zM4 7v4" /></Draw>
      </TrayButton>
      <Clock>4:15 PM<br />7/23/2025</Clock>
      <Notices aria-label="22 notifications">
        <svg width="42" height="40" viewBox="0 0 42 40">
          <path d="M0 0h24v20H8l-5 5v-5H0z" fill="#fff" /><path d="M5 6h14M5 10h14M5 14h9" stroke="#1c1c1c" strokeWidth="1.4" />
          <circle cx="23" cy="28" r="14" fill="#484848" stroke="#8a8a8a" strokeWidth="1.2" />
          <text x="23" y="34" textAnchor="middle" fontFamily={ui} fontWeight="600" fontSize="17" fill="#fff">22</text>
        </svg>
      </Notices>
      <PeekButton aria-label="Show desktop" />
    </Tray>
  </Taskbar>
);

export default function App() {
  return (
    <Shell>
      <Global />
      <Title />
      <Tabs />
      <Ribbon />
      <FormulaBar />
      <Worksheet />
      <SheetTabs />
      <StatusBar />
      <TaskbarView />
    </Shell>
  );
}
